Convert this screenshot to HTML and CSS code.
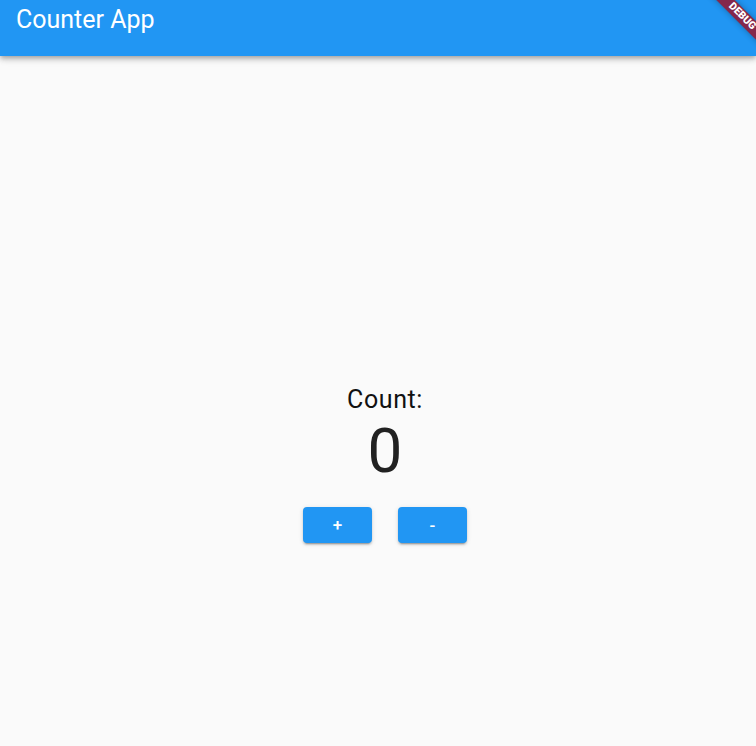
FILE: index.html
```
<!DOCTYPE html>
<html>
<head>
<meta charset="utf-8">
<link rel="stylesheet" href="styles.css">
</head>
<body>
<div class="app">
  <header class="appbar">
    <h1 class="title">Counter App</h1>
  </header>
  <main class="content">
    <div class="counter">
      <div class="label">Count:</div>
      <div class="value">0</div>
      <div class="buttons">
        <button class="btn">+</button>
        <button class="btn">-</button>
      </div>
    </div>
  </main>
  <div class="banner"><span>DEBUG</span></div>
</div>
</body>
</html>
```
FILE: styles.css
```
* { box-sizing: border-box; }
html, body { margin: 0; padding: 0; }
body {
  width: 756px;
  height: 746px;
  overflow: hidden;
  background: #fafafa;
  font-family: Roboto, "Liberation Sans", sans-serif;
}
.app {
  position: relative;
  width: 756px;
  height: 746px;
  display: flex;
  flex-direction: column;
  overflow: hidden;
}
.appbar {
  height: 56px;
  flex: none;
  background: #2196f3;
  display: flex;
  align-items: flex-start;
  padding: 5px 16px 0;
  box-shadow: 0 2px 4px -1px rgba(0,0,0,.2), 0 4px 5px 0 rgba(0,0,0,.14), 0 1px 10px 0 rgba(0,0,0,.12);
  position: relative;
  z-index: 1;
}
.title {
  margin: 0;
  color: #fff;
  font-size: 25px;
  font-weight: 400;
  line-height: 30px;
}
.content {
  flex: 1;
  display: flex;
  align-items: center;
  justify-content: center;
  padding-top: 126px;
}
.counter {
  display: flex;
  flex-direction: column;
  align-items: center;
  margin-left: 14px;
}
.label {
  font-size: 25px;
  line-height: 30px;
  letter-spacing: 0.6px;
  color: #111;
}
.value {
  font-size: 62px;
  line-height: 72px;
  color: #212121;
}
.buttons {
  display: flex;
  gap: 26px;
  margin-top: 20px;
}
.btn {
  width: 69px;
  height: 36px;
  border: none;
  border-radius: 4px;
  background: #2196f3;
  color: #fff;
  font-family: Roboto, "Liberation Sans", sans-serif;
  font-size: 17px;
  font-weight: 500;
  padding: 0;
  box-shadow: 0 3px 1px -2px rgba(0,0,0,.2), 0 2px 2px 0 rgba(0,0,0,.14), 0 1px 5px 0 rgba(0,0,0,.12);
}
.banner {
  position: absolute;
  left: 702px;
  top: 10px;
  width: 80px;
  height: 13px;
  background: rgba(150, 20, 45, 0.85);
  transform: rotate(45deg);
  box-shadow: 0 0 6px rgba(0,0,0,.3);
  display: flex;
  align-items: center;
  justify-content: center;
  z-index: 2;
}
.banner span {
  color: #fff;
  font-size: 10.5px;
  font-weight: 900;
  line-height: 1;
}
```
